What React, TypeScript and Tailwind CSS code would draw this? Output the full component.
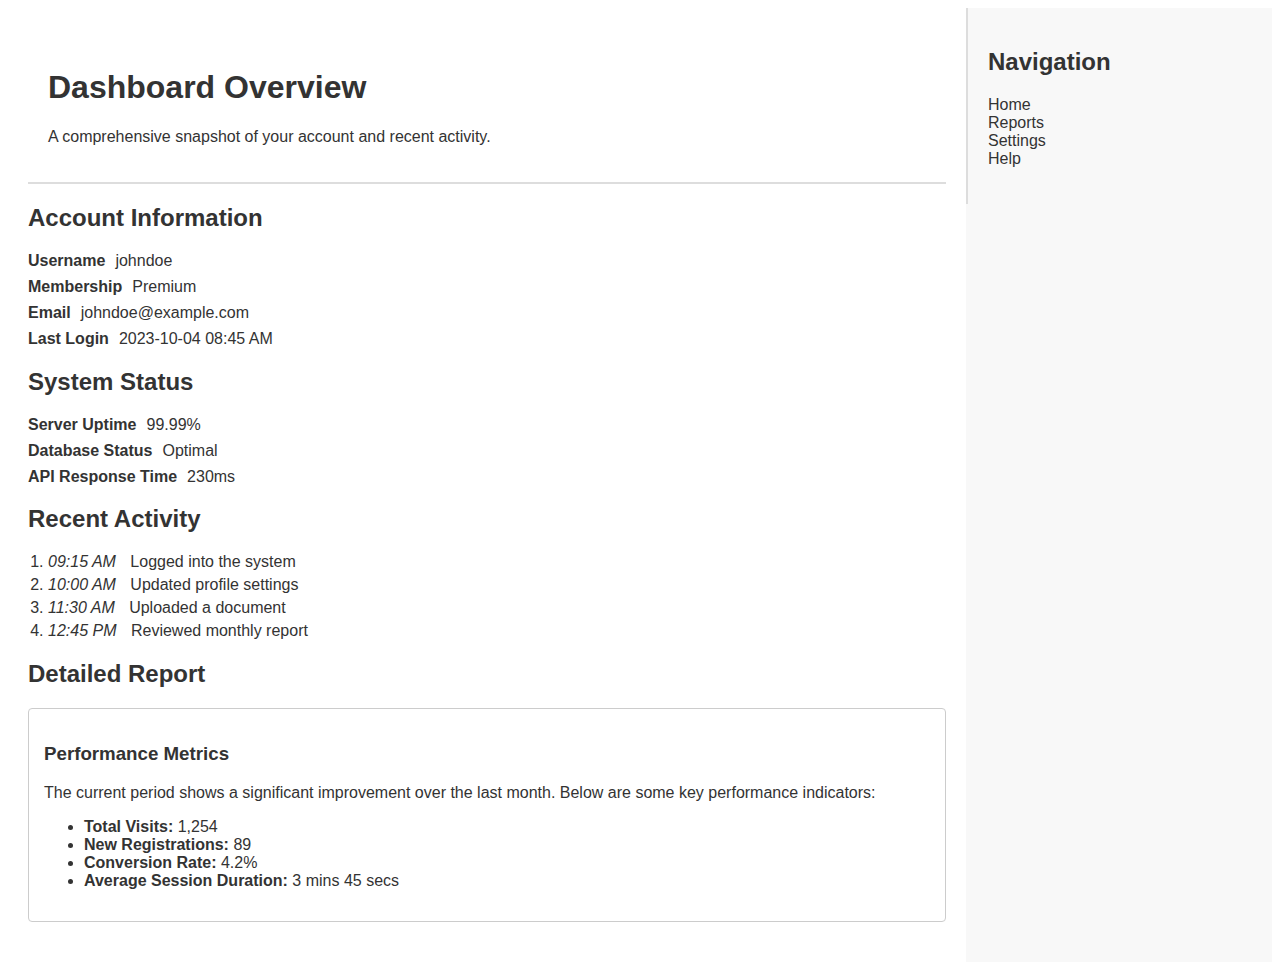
import React from "react";

const account = [
  ["Username", "johndoe"],
  ["Membership", "Premium"],
  ["Email", "johndoe@example.com"],
  ["Last Login", "2023-10-04 08:45 AM"],
];

const system = [
  ["Server Uptime", "99.99%"],
  ["Database Status", "Optimal"],
  ["API Response Time", "230ms"],
];

const activity = [
  ["09:15 AM", "Logged into the system"],
  ["10:00 AM", "Updated profile settings"],
  ["11:30 AM", "Uploaded a document"],
  ["12:45 PM", "Reviewed monthly report"],
];

const metrics = [
  ["Total Visits:", "1,254"],
  ["New Registrations:", "89"],
  ["Conversion Rate:", "4.2%"],
  ["Average Session Duration:", "3 mins 45 secs"],
];

function Rows({ items }: { items: string[][] }) {
  return (
    <div>
      {items.map(([k, v]) => (
        <div key={k} className="mb-2">
          <span className="font-bold mr-[10px]">{k}</span>
          <span>{v}</span>
        </div>
      ))}
    </div>
  );
}

export default function App() {
  return (
    <div
      className="bg-white text-[#333] text-[16px] leading-[normal]"
      style={{ fontFamily: '"Liberation Sans", Arial, sans-serif' }}
    >
      <div className="m-2 flex min-h-[954px]">
        <main className="flex-1 p-5">
          <header className="p-5 border-b-2 border-[#ddd]">
            <h1 className="text-[32px] font-bold my-[21.44px]">Dashboard Overview</h1>
            <p className="my-4">A comprehensive snapshot of your account and recent activity.</p>
          </header>

          <section>
            <h2 className="text-[24px] font-bold my-[19.92px]">Account Information</h2>
            <Rows items={account} />
          </section>

          <section>
            <h2 className="text-[24px] font-bold my-[19.92px]">System Status</h2>
            <Rows items={system} />
          </section>

          <section>
            <h2 className="text-[24px] font-bold my-[19.92px]">Recent Activity</h2>
            <ol className="list-decimal pl-5">
              {activity.map(([t, d]) => (
                <li key={t} className="mb-[5px]">
                  <em className="italic mr-[10px]">{t}</em> {d}
                </li>
              ))}
            </ol>
          </section>

          <section>
            <h2 className="text-[24px] font-bold my-[19.92px]">Detailed Report</h2>
            <div className="border border-[#ccc] rounded-[4px] px-[15px] py-[15px]">
              <h3 className="text-[18.72px] font-bold my-[18.72px]">Performance Metrics</h3>
              <p className="my-4">
                The current period shows a significant improvement over the last month. Below are some key performance indicators:
              </p>
              <ul className="list-disc pl-10 my-4">
                {metrics.map(([k, v]) => (
                  <li key={k}>
                    <strong className="font-bold">{k}</strong> {v}
                  </li>
                ))}
              </ul>
            </div>
          </section>
        </main>

        <aside className="w-[306px] bg-[#f8f8f8]">
          <nav className="border-l-2 border-[#ddd] p-5">
            <h2 className="text-[24px] font-bold my-[19.92px]">Navigation</h2>
            <ul className="my-4">
              {["Home", "Reports", "Settings", "Help"].map((l) => (
                <li key={l}>
                  <a href="#" className="text-[#333] no-underline">{l}</a>
                </li>
              ))}
            </ul>
          </nav>
        </aside>
      </div>
    </div>
  );
}
